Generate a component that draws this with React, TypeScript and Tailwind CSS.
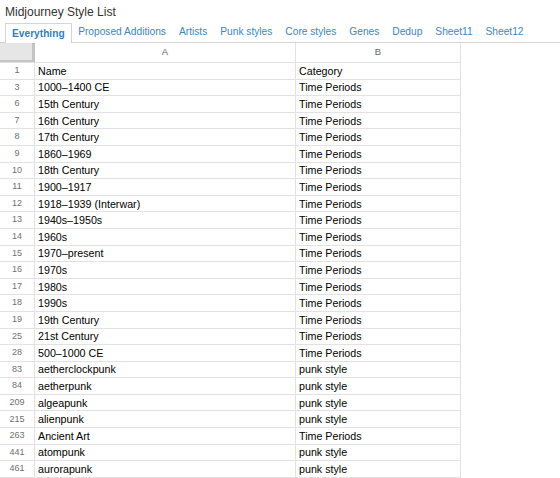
const TABS = [
  "Everything",
  "Proposed Additions",
  "Artists",
  "Punk styles",
  "Core styles",
  "Genes",
  "Dedup",
  "Sheet11",
  "Sheet12",
];

const ROWS: [string, string, string][] = [
  ["1", "Name", "Category"],
  ["3", "1000–1400 CE", "Time Periods"],
  ["6", "15th Century", "Time Periods"],
  ["7", "16th Century", "Time Periods"],
  ["8", "17th Century", "Time Periods"],
  ["9", "1860–1969", "Time Periods"],
  ["10", "18th Century", "Time Periods"],
  ["11", "1900–1917", "Time Periods"],
  ["12", "1918–1939 (Interwar)", "Time Periods"],
  ["13", "1940s–1950s", "Time Periods"],
  ["14", "1960s", "Time Periods"],
  ["15", "1970–present", "Time Periods"],
  ["16", "1970s", "Time Periods"],
  ["17", "1980s", "Time Periods"],
  ["18", "1990s", "Time Periods"],
  ["19", "19th Century", "Time Periods"],
  ["25", "21st Century", "Time Periods"],
  ["28", "500–1000 CE", "Time Periods"],
  ["83", "aetherclockpunk", "punk style"],
  ["84", "aetherpunk", "punk style"],
  ["209", "algeapunk", "punk style"],
  ["215", "alienpunk", "punk style"],
  ["263", "Ancient Art", "Time Periods"],
  ["441", "atompunk", "punk style"],
  ["461", "aurorapunk", "punk style"],
];

export default function App() {
  return (
    <div
      className="w-[560px] h-[478px] overflow-hidden bg-white text-[#222]"
      style={{ fontFamily: '"Liberation Sans", Arial, sans-serif' }}
    >
      {/* Title */}
      <div className="h-[23px] pl-[5px] pt-[5px] text-[12px] leading-[14px] text-[#333]">
        Midjourney Style List
      </div>

      {/* Sheet tabs */}
      <div className="flex h-[20px] items-end border-b border-[#d4d4d4] pl-[5px]">
        {TABS.map((t, i) =>
          i === 0 ? (
            <div
              key={t}
              className="-mb-px flex h-[20px] items-center border border-b-0 border-[#d4d4d4] bg-white px-[6px] text-[10.2px] font-bold text-[#2f7fc1]"
            >
              {t}
            </div>
          ) : (
            <div
              key={t}
              className="flex h-[20px] items-center px-[6.5px] text-[10.2px] text-[#3b86c6]"
            >
              {t}
            </div>
          )
        )}
      </div>

      {/* Grid */}
      <div className="w-[461px] text-[10.7px]">
        <div className="flex h-[20px] border-b border-[#e2e2e2]">
          <div className="w-[35px] shrink-0 border-r-[3px] border-b-[2px] border-r-[#c4c4c4] border-b-[#c4c4c4] bg-[#e6e6e6]" />
          <div className="flex w-[261px] items-center justify-center border-r border-[#e2e2e2] text-[9.5px] text-[#666]">
            A
          </div>
          <div className="flex w-[165px] items-center justify-center border-r border-[#e2e2e2] text-[9.5px] text-[#666]">
            B
          </div>
        </div>
        {ROWS.map(([n, name, cat]) => (
          <div key={n} className="flex h-[16.6px] border-b border-[#e2e2e2]">
            <div className="flex w-[35px] shrink-0 items-center justify-center border-r border-[#e2e2e2] text-[9px] text-[#6f6f6f]">
              {n}
            </div>
            <div className="flex w-[261px] items-center border-r border-[#e2e2e2] pl-[3px] text-black">
              {name}
            </div>
            <div className="flex w-[165px] items-center border-r border-[#e2e2e2] pl-[3px] text-black">
              {cat}
            </div>
          </div>
        ))}
      </div>
    </div>
  );
}
